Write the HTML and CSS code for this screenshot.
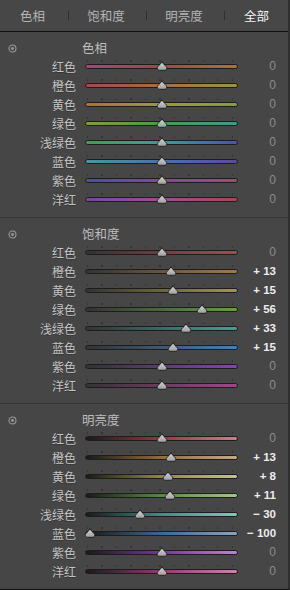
FILE: index.html
```html
<!DOCTYPE html>
<html>

<head>
    <meta charset="utf-8">
    <title>HSL</title>
    <meta name="viewport" content="width=device-width, initial-scale=1.0">
    <link rel="stylesheet" href="styles.css">
</head>

<body>
    <svg class="defs" width="0" height="0">
        <defs>
            <linearGradient id="knobFill" x1="0" y1="0" x2="0" y2="1">
                <stop offset="0" stop-color="#dadada" />
                <stop offset="1" stop-color="#9c9c9c" />
            </linearGradient>
            <symbol id="knob" viewBox="0 0 12 10">
                <path d="M6 0.7 C7 2.6 8.2 3.9 9.6 5 C11.6 6.6 10.9 9.3 8.3 9.3 L3.7 9.3 C1.1 9.3 0.4 6.6 2.4 5 C3.8 3.9 5 2.6 6 0.7 Z" fill="url(#knobFill)" stroke="#1c1c1c" stroke-width="0.9" />
            </symbol>
        </defs>
    </svg>

    <div class="panel">
        <div class="tabs">
            <span class="tab">色相</span>
            <span class="sep"></span>
            <span class="tab">饱和度</span>
            <span class="sep"></span>
            <span class="tab">明亮度</span>
            <span class="sep"></span>
            <span class="tab active">全部</span>
        </div>

        <!-- 色相 -->
        <div class="group">
            <div class="group-head">
                <svg class="target" width="9" height="9" viewBox="0 0 9 9"><circle cx="4.5" cy="4.5" r="3.5" fill="none" stroke="#9a9a9a" stroke-width="1.1" /><circle cx="4.5" cy="4.5" r="1.4" fill="#9a9a9a" /></svg>
                <span class="group-title">色相</span>
            </div>
            <div class="row"><span class="label">红色</span><div class="track h-red"><svg class="thumb" style="left: 76px"><use href="#knob" /></svg></div><span class="value">0</span></div>
            <div class="row"><span class="label">橙色</span><div class="track h-orange"><svg class="thumb" style="left: 76px"><use href="#knob" /></svg></div><span class="value">0</span></div>
            <div class="row"><span class="label">黄色</span><div class="track h-yellow"><svg class="thumb" style="left: 76px"><use href="#knob" /></svg></div><span class="value">0</span></div>
            <div class="row"><span class="label">绿色</span><div class="track h-green"><svg class="thumb" style="left: 76px"><use href="#knob" /></svg></div><span class="value">0</span></div>
            <div class="row"><span class="label">浅绿色</span><div class="track h-aqua"><svg class="thumb" style="left: 76px"><use href="#knob" /></svg></div><span class="value">0</span></div>
            <div class="row"><span class="label">蓝色</span><div class="track h-blue"><svg class="thumb" style="left: 76px"><use href="#knob" /></svg></div><span class="value">0</span></div>
            <div class="row"><span class="label">紫色</span><div class="track h-purple"><svg class="thumb" style="left: 76px"><use href="#knob" /></svg></div><span class="value">0</span></div>
            <div class="row"><span class="label">洋红</span><div class="track h-magenta"><svg class="thumb" style="left: 76px"><use href="#knob" /></svg></div><span class="value">0</span></div>
        </div>

        <!-- 饱和度 -->
        <div class="group">
            <div class="group-head">
                <svg class="target" width="9" height="9" viewBox="0 0 9 9"><circle cx="4.5" cy="4.5" r="3.5" fill="none" stroke="#9a9a9a" stroke-width="1.1" /><circle cx="4.5" cy="4.5" r="1.4" fill="#9a9a9a" /></svg>
                <span class="group-title">饱和度</span>
            </div>
            <div class="row"><span class="label">红色</span><div class="track s-red"><svg class="thumb" style="left: 76px"><use href="#knob" /></svg></div><span class="value">0</span></div>
            <div class="row"><span class="label">橙色</span><div class="track s-orange"><svg class="thumb" style="left: 85.4px"><use href="#knob" /></svg></div><span class="value set">+ 13</span></div>
            <div class="row"><span class="label">黄色</span><div class="track s-yellow"><svg class="thumb" style="left: 86.8px"><use href="#knob" /></svg></div><span class="value set">+ 15</span></div>
            <div class="row"><span class="label">绿色</span><div class="track s-green"><svg class="thumb" style="left: 116.3px"><use href="#knob" /></svg></div><span class="value set">+ 56</span></div>
            <div class="row"><span class="label">浅绿色</span><div class="track s-aqua"><svg class="thumb" style="left: 99.8px"><use href="#knob" /></svg></div><span class="value set">+ 33</span></div>
            <div class="row"><span class="label">蓝色</span><div class="track s-blue"><svg class="thumb" style="left: 86.8px"><use href="#knob" /></svg></div><span class="value set">+ 15</span></div>
            <div class="row"><span class="label">紫色</span><div class="track s-purple"><svg class="thumb" style="left: 76px"><use href="#knob" /></svg></div><span class="value">0</span></div>
            <div class="row"><span class="label">洋红</span><div class="track s-magenta"><svg class="thumb" style="left: 76px"><use href="#knob" /></svg></div><span class="value">0</span></div>
        </div>

        <!-- 明亮度 -->
        <div class="group">
            <div class="group-head">
                <svg class="target" width="9" height="9" viewBox="0 0 9 9"><circle cx="4.5" cy="4.5" r="3.5" fill="none" stroke="#9a9a9a" stroke-width="1.1" /><circle cx="4.5" cy="4.5" r="1.4" fill="#9a9a9a" /></svg>
                <span class="group-title">明亮度</span>
            </div>
            <div class="row"><span class="label">红色</span><div class="track l-red"><svg class="thumb" style="left: 76px"><use href="#knob" /></svg></div><span class="value">0</span></div>
            <div class="row"><span class="label">橙色</span><div class="track l-orange"><svg class="thumb" style="left: 85.4px"><use href="#knob" /></svg></div><span class="value set">+ 13</span></div>
            <div class="row"><span class="label">黄色</span><div class="track l-yellow"><svg class="thumb" style="left: 81.8px"><use href="#knob" /></svg></div><span class="value set">+ 8</span></div>
            <div class="row"><span class="label">绿色</span><div class="track l-green"><svg class="thumb" style="left: 83.9px"><use href="#knob" /></svg></div><span class="value set">+ 11</span></div>
            <div class="row"><span class="label">浅绿色</span><div class="track l-aqua"><svg class="thumb" style="left: 54.4px"><use href="#knob" /></svg></div><span class="value set">− 30</span></div>
            <div class="row"><span class="label">蓝色</span><div class="track l-blue"><svg class="thumb" style="left: 4px"><use href="#knob" /></svg></div><span class="value set">− 100</span></div>
            <div class="row"><span class="label">紫色</span><div class="track l-purple"><svg class="thumb" style="left: 76px"><use href="#knob" /></svg></div><span class="value">0</span></div>
            <div class="row"><span class="label">洋红</span><div class="track l-magenta"><svg class="thumb" style="left: 76px"><use href="#knob" /></svg></div><span class="value">0</span></div>
        </div>
    </div>
</body>

</html>
```

FILE: styles.css
```css
* {
    margin: 0;
    padding: 0;
    box-sizing: border-box;
}

body {
    background-color: #464646;
    font-family: "Noto Sans CJK SC", "Noto Sans", sans-serif;
}

.defs {
    display: block;
    width: 0;
    height: 0;
}

.panel {
    width: 290px;
    background-color: #464646;
    border-right: 2px solid #2f2f2f;
    border-bottom: 1px solid #0e0e0e;
}

/* tab bar */
.tabs {
    display: grid;
    grid-template-columns: 68px 1px 77px 1px 77px 1px 1fr;
    align-items: center;
    height: 32px;
    border-bottom: 1px solid #101010;
    background-color: #474747;
}

.tab {
    text-align: center;
    padding-right: 3px;
    font-size: 12.5px;
    line-height: 31px;
    color: #b4b4b4;
}

.tab.active {
    color: #f4f4f4;
    padding-right: 0;
}

.sep {
    height: 9px;
    background-color: #2e2e2e;
}

/* groups */
.group {
    padding: 6px 0 8px;
}

.group + .group {
    border-top: 1px solid #363636;
}

.group-head {
    display: flex;
    align-items: center;
    height: 19px;
}

.target {
    display: block;
    margin-left: 8px;
    margin-top: 2px;
}

.group-title {
    margin-left: 65px;
    font-size: 12.5px;
    color: #bdbdbd;
    line-height: 19px;
}

.row {
    display: grid;
    grid-template-columns: 76px 153px 1fr;
    column-gap: 9px;
    align-items: center;
    height: 19px;
}

.label {
    text-align: right;
    font-size: 12px;
    line-height: 19px;
    color: #c4c4c4;
    text-shadow: 0 1px 0 rgba(0, 0, 0, 0.25);
}

.value {
    text-align: right;
    padding-right: 12px;
    white-space: nowrap;
    font-family: "Liberation Sans", Arial, sans-serif;
    font-size: 12px;
    line-height: 19px;
    color: #8c8c8c;
}

.value.set {
    color: #ececec;
    font-weight: bold;
    font-size: 11.5px;
}

/* slider */
.track {
    position: relative;
    height: 5px;
    border: 1px solid #1d1d1d;
    border-radius: 3px;
}

.track::before {
    content: "";
    position: absolute;
    left: 1px;
    top: -5px;
    width: 146px;
    height: 2px;
    background: repeating-linear-gradient(to right, #343434 0 1px, transparent 1px 14.5px);
}

.thumb {
    position: absolute;
    top: -4px;
    width: 12px;
    height: 10px;
    margin-left: -6px;
}

/* hue */
.h-red { background: linear-gradient(to right, #9c4a78, #a44448 50%, #a27646); }
.h-orange { background: linear-gradient(to right, #a4484a, #a46e44 50%, #9e9242); }
.h-yellow { background: linear-gradient(to right, #a27244, #9c9842 50%, #849c42); }
.h-green { background: linear-gradient(to right, #849a42, #4c984a 50%, #429a8a); }
.h-aqua { background: linear-gradient(to right, #4c9854, #42989a 50%, #4a56a4); }
.h-blue { background: linear-gradient(to right, #42989e, #4872b0 50%, #5c48a4); }
.h-purple { background: linear-gradient(to right, #4a4ea4, #7c4aa4 50%, #a44a66); }
.h-magenta { background: linear-gradient(to right, #7646a4, #a44a98 50%, #a44852); }

/* saturation */
.s-red { background: linear-gradient(to right, #333, #a44a54); }
.s-orange { background: linear-gradient(to right, #333, #a47846); }
.s-yellow { background: linear-gradient(to right, #333, #9e9844); }
.s-green { background: linear-gradient(to right, #333, #62a044); }
.s-aqua { background: linear-gradient(to right, #333, #44a098); }
.s-blue { background: linear-gradient(to right, #333, #4680b4); }
.s-purple { background: linear-gradient(to right, #333, #8644ac); }
.s-magenta { background: linear-gradient(to right, #333, #a4448a); }

/* luminance */
.l-red { background: linear-gradient(to right, #1a1a1a, #943a3c 50%, #c48486); }
.l-orange { background: linear-gradient(to right, #1a1a1a, #946a3a 50%, #c4aa86); }
.l-yellow { background: linear-gradient(to right, #1a1a1a, #8e8c3a 50%, #c4c286); }
.l-green { background: linear-gradient(to right, #1a1a1a, #528e3a 50%, #a2c486); }
.l-aqua { background: linear-gradient(to right, #1a1a1a, #3a9086 50%, #86c4bc); }
.l-blue { background: linear-gradient(to right, #1a1a1a, #3a6890 50%, #86a4c4); }
.l-purple { background: linear-gradient(to right, #1a1a1a, #723a90 50%, #b886c4); }
.l-magenta { background: linear-gradient(to right, #1a1a1a, #903a74 50%, #c486b0); }
```
